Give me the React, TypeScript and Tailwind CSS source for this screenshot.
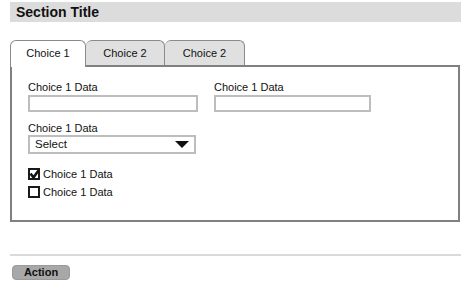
import React from "react";

const font = { fontFamily: '"Liberation Sans", Arial, sans-serif' };

const Field = ({ width }: { width: string }) => {
  return (
    <div className="flex flex-col">
      <span className="text-[11px] leading-[14px] text-[#111]">Choice 1 Data</span>
      <div className={`mt-px h-[17px] border-2 border-[#bdbdbd] bg-white ${width}`}></div>
    </div>
  );
};

const CheckRow = ({ checked }: { checked: boolean }) => {
  return (
    <div className="flex items-center h-[14px] gap-[3px]">
      <div className="w-[12px] h-[12px] border-2 border-[#1a1a1a] bg-white relative">
        {checked ? (
          <svg width="9" height="9" viewBox="0 0 9 9" className="absolute left-0 top-0">
            <path d="M0.5 3.5 L3.5 7.5 L8.5 0.5" fill="none" stroke="#111" strokeWidth="2.6" />
          </svg>
        ) : null}
      </div>
      <span className="text-[11px] leading-[14px] text-[#111]">Choice 1 Data</span>
    </div>
  );
};

export default function App() {
  return (
    <div className="w-[474px] h-[282px] bg-white pt-[2px]" style={font}>
      <div className="mx-[10px] w-[451px] h-[20px] bg-[#dcdcdc] pl-[6px] flex items-center">
        <span className="text-[14px] font-bold text-[#111]">Section Title</span>
      </div>

      <div className="mt-[18px] ml-[10px] flex items-end h-[25px]">
        <div className="relative z-10 w-[76px] h-[27px] -mb-[2px] bg-white border border-b-0 border-[#8a8a8a] rounded-t-[6px] flex items-center justify-center pb-[2px]">
          <span className="text-[11px] text-[#111]">Choice 1</span>
        </div>
        <div className="w-[79px] h-[25px] bg-[#e0e0e0] border border-b-0 border-l-0 border-[#8a8a8a] rounded-t-[6px] flex items-center justify-center">
          <span className="text-[11px] text-[#111]">Choice 2</span>
        </div>
        <div className="w-[80px] h-[25px] bg-[#e0e0e0] border border-b-0 border-l-0 border-[#8a8a8a] rounded-t-[6px] flex items-center justify-center">
          <span className="text-[11px] text-[#111]">Choice 2</span>
        </div>
      </div>

      <div className="ml-[10px] w-[450px] h-[157px] border-2 border-[#808080] px-[16px] pt-[13px]">
        <div className="flex gap-[16px]">
          <Field width="w-[170px]" />
          <Field width="w-[157px]" />
        </div>

        <div className="mt-[9px] flex flex-col">
          <span className="text-[11px] leading-[14px] text-[#111]">Choice 1 Data</span>
          <div className="w-[168px] h-[19px] border-2 border-[#bdbdbd] bg-white flex items-center justify-between pl-[5px] pr-[5px]">
            <span className="text-[11.5px] text-[#111]">Select</span>
            <svg width="14" height="7" viewBox="0 0 14 7">
              <path d="M0 0 L14 0 L7 7 Z" fill="#111" />
            </svg>
          </div>
        </div>

        <div className="mt-[13px] flex flex-col gap-[4px]">
          <CheckRow checked={true} />
          <CheckRow checked={false} />
        </div>
      </div>

      <div className="mt-[32px] ml-[10px] w-[451px] h-[2px] bg-[#dadada]"></div>

      <div className="mt-[9px] ml-[12px] w-[58px] h-[15px] rounded-[4px] bg-[#a8a8a8] border border-[#9a9a9a] flex items-center justify-center">
        <span className="text-[11px] font-bold text-[#111]">Action</span>
      </div>
    </div>
  );
}
